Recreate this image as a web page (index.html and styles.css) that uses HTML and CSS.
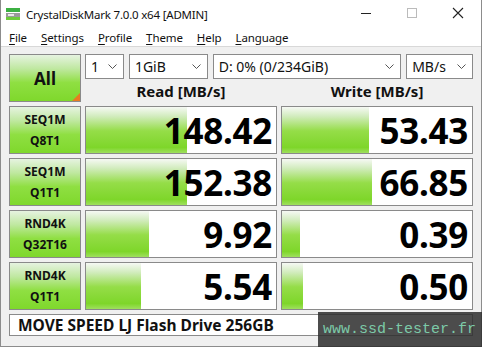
FILE: index.html
```html
<!DOCTYPE html>
<html>
<head>
<meta charset="utf-8">
<link rel="stylesheet" href="styles.css">
</head>
<body>
<div class="window">
  <div class="titlebar">
    <svg class="appicon" width="16" height="16" viewBox="0 0 16 16">
      <rect x="1" y="2" width="14" height="4" fill="#3cb043"/>
      <rect x="1" y="7" width="14" height="7" fill="#9a9a9a"/>
      <rect x="1" y="11" width="14" height="3" fill="#6dcc3a"/>
      <rect x="3" y="8" width="6" height="2" fill="#e8e8e8"/>
    </svg>
    <span class="title">CrystalDiskMark 7.0.0 x64 [ADMIN]</span>
    <div class="controls">
      <svg width="46" height="28" viewBox="0 0 46 28"><line x1="18" y1="13.5" x2="28" y2="13.5" stroke="#222" stroke-width="1"/></svg>
      <svg width="46" height="28" viewBox="0 0 46 28"><rect x="18.5" y="8.5" width="9" height="9" fill="none" stroke="#bbb" stroke-width="1"/></svg>
      <svg width="46" height="28" viewBox="0 0 46 28"><path d="M18 8 L28 18 M28 8 L18 18" stroke="#222" stroke-width="1.1"/></svg>
    </div>
  </div>
  <div class="menubar">
    <span><u>F</u>ile</span>
    <span><u>S</u>ettings</span>
    <span><u>P</u>rofile</span>
    <span><u>T</u>heme</span>
    <span><u>H</u>elp</span>
    <span><u>L</u>anguage</span>
  </div>
  <div class="client">
    <div class="grid">
      <div class="btn all">All<span class="corner"></span></div>
      <div class="topright">
        <div class="combos">
          <div class="combo c1"><span>1</span><svg width="9" height="6" viewBox="0 0 9 6"><polyline points="0.5,0.5 4.5,4.5 8.5,0.5" fill="none" stroke="#555"/></svg></div>
          <div class="combo c2"><span>1GiB</span><svg width="9" height="6" viewBox="0 0 9 6"><polyline points="0.5,0.5 4.5,4.5 8.5,0.5" fill="none" stroke="#555"/></svg></div>
          <div class="combo c3"><span>D: 0% (0/234GiB)</span><svg width="9" height="6" viewBox="0 0 9 6"><polyline points="0.5,0.5 4.5,4.5 8.5,0.5" fill="none" stroke="#555"/></svg></div>
          <div class="combo c4"><span>MB/s</span><svg width="9" height="6" viewBox="0 0 9 6"><polyline points="0.5,0.5 4.5,4.5 8.5,0.5" fill="none" stroke="#555"/></svg></div>
        </div>
        <div class="headers">
          <div class="hdr">Read [MB/s]</div>
          <div class="hdr">Write [MB/s]</div>
        </div>
      </div>

      <div class="btn label">SEQ1M<br>Q8T1</div>
      <div class="res"><div class="bar" style="width:101px"></div><span class="val">148.42</span></div>
      <div class="res"><div class="bar" style="width:87px"></div><span class="val">53.43</span></div>

      <div class="btn label">SEQ1M<br>Q1T1</div>
      <div class="res"><div class="bar" style="width:101px"></div><span class="val">152.38</span></div>
      <div class="res"><div class="bar" style="width:90px"></div><span class="val">66.85</span></div>

      <div class="btn label">RND4K<br>Q32T16</div>
      <div class="res"><div class="bar" style="width:63px"></div><span class="val">9.92</span></div>
      <div class="res"><div class="bar" style="width:18px"></div><span class="val">0.39</span></div>

      <div class="btn label">RND4K<br>Q1T1</div>
      <div class="res"><div class="bar" style="width:55px"></div><span class="val">5.54</span></div>
      <div class="res"><div class="bar" style="width:21px"></div><span class="val">0.50</span></div>

      <div class="name">MOVE SPEED LJ Flash Drive 256GB</div>
    </div>
  </div>
  <div class="watermark">www.ssd-tester.fr</div>
</div>
</body>
</html>
```
FILE: styles.css
```css
* { box-sizing: border-box; }
html, body { margin: 0; padding: 0; background: #fff; }
body { width: 482px; height: 347px; overflow: hidden; font-family: "Noto Sans", "Open Sans", sans-serif; }

.window {
  position: relative;
  width: 482px;
  height: 347px;
  border: 1px solid #8c8c8c;
  border-top: none;
  background: #fff;
  display: flex;
  flex-direction: column;
}

.titlebar {
  height: 28px;
  display: flex;
  align-items: center;
  background: #fff;
}
.appicon { margin-left: 4px; margin-right: 5px; }
.title { font-size: 11.5px; color: #111; letter-spacing: -0.2px; }
.controls { margin-left: auto; display: flex; }
.controls svg { display: block; }

.menubar {
  height: 18px;
  display: flex;
  align-items: center;
  font-size: 11.5px;
  color: #111;
  padding-left: 8px;
  gap: 14px;
  background: #fff;
  letter-spacing: -0.1px;
}
.menubar u { text-decoration-thickness: 1px; text-underline-offset: 2px; }

.client {
  flex: 1;
  background: #f0f0f0;
  border-top: 1px solid #d8d8d8;
  padding: 7px 0 0 8px;
}

.grid {
  display: grid;
  grid-template-columns: 72px 192px 192px;
  grid-template-rows: 48px 48px 48px 48px 48px 22px;
  column-gap: 4px;
  row-gap: 4px;
}

.btn {
  border: 1px solid #8a8a8a;
  background: linear-gradient(to bottom, #e6f3e0 0%, #bfe8a0 30%, #8fdf42 60%, #7fd82c 100%);
  display: flex;
  align-items: center;
  justify-content: center;
  text-align: center;
  font-weight: 700;
  color: #111;
}
.all { position: relative; font-size: 17px; }
.corner {
  position: absolute;
  right: 0;
  bottom: 0;
  width: 0;
  height: 0;
  border-style: solid;
  border-width: 0 0 8px 8px;
  border-color: transparent transparent #e87b22 transparent;
}
.label { font-size: 12px; line-height: 21px; }

.topright { grid-column: 2 / 4; display: flex; flex-direction: column; }
.combos { height: 25px; display: flex; gap: 5px; }
.combo {
  height: 25px;
  border: 1px solid #8a8a8a;
  background: #fff;
  display: flex;
  align-items: center;
  justify-content: space-between;
  padding: 0 6px 0 5px;
  font-size: 14px;
  color: #111;
}
.c1 { width: 39px; }
.c2 { width: 79px; }
.c3 { width: 189px; }
.c4 { width: 67px; }
.headers { flex: 1; display: grid; grid-template-columns: 192px 192px; column-gap: 4px; align-items: center; }
.hdr { text-align: center; font-weight: 700; font-size: 15px; color: #111; padding-top: 1px; }

.res {
  position: relative;
  border: 1px solid #8a8a8a;
  background: #fff;
  display: flex;
  align-items: center;
  justify-content: flex-end;
  padding-right: 4px;
}
.bar {
  position: absolute;
  left: 0;
  top: 0;
  bottom: 0;
  background: linear-gradient(to bottom, #f6f9f4 0%, #d2ecbe 20%, #95dd48 52%, #7ed62a 88%, #9fe05e 100%);
}
.val {
  position: relative;
  font-weight: 700;
  font-size: 35px;
  letter-spacing: -0.3px;
  color: #000;
  line-height: 1;
}

.name {
  grid-column: 1 / 4;
  border: 1px solid #8a8a8a;
  background: #fff;
  display: flex;
  align-items: center;
  padding-left: 8px;
  font-weight: 700;
  font-size: 15.5px;
  color: #111;
}

.watermark {
  position: absolute;
  left: 317px;
  top: 312px;
  width: 165px;
  height: 35px;
  background: rgba(45, 45, 45, 0.85);
  color: #7ccaa8;
  font-family: "Liberation Mono", "DejaVu Sans Mono", monospace;
  font-size: 15px;
  padding: 9px 0 0 5px;
  white-space: nowrap;
}
```
